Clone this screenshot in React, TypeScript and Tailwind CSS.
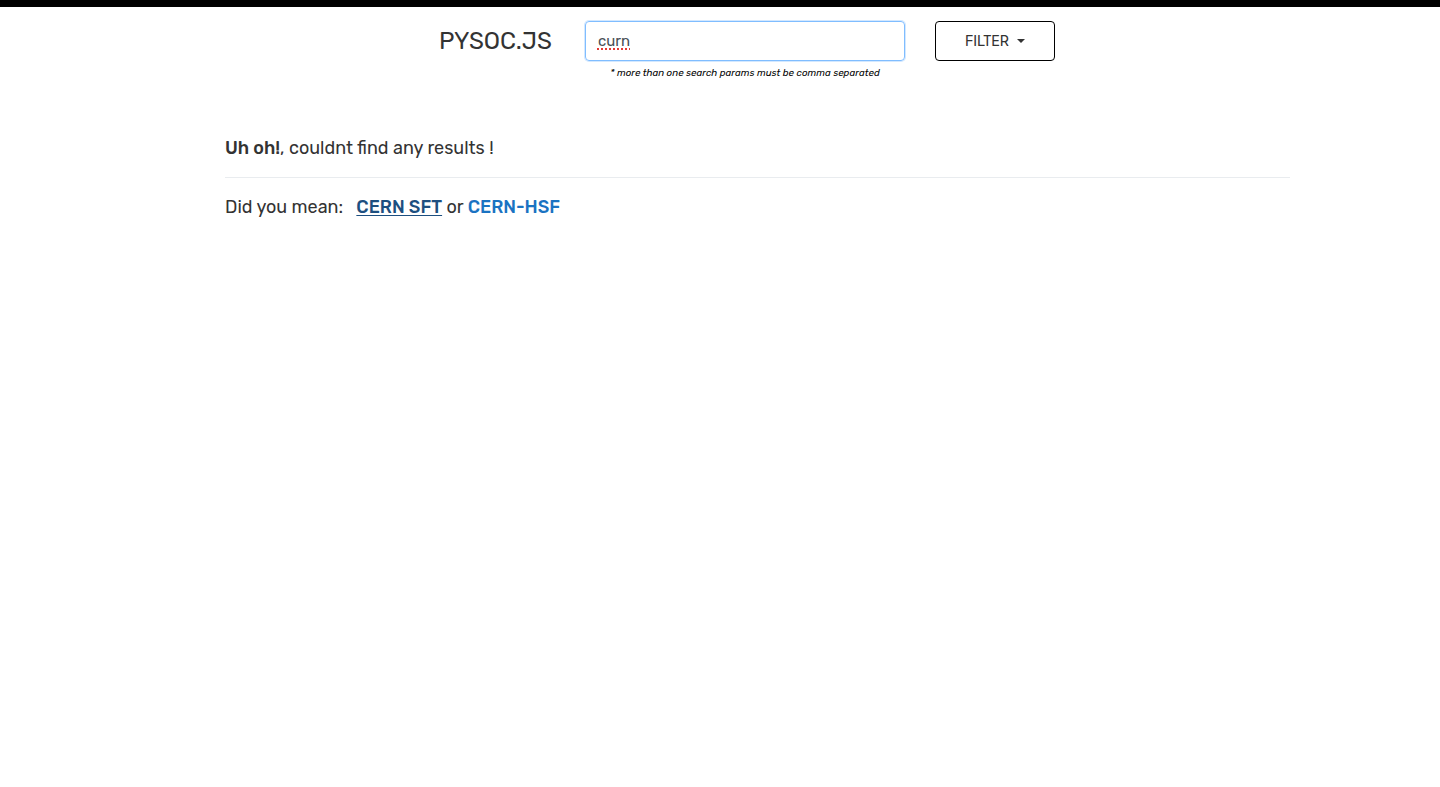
import React from "react";

export default function App() {
  const font = { fontFamily: '"Rubik", Inter, "Noto Sans", sans-serif' };
  return (
    <div className="min-h-[787px] bg-white text-[#212529]" style={font}>
      <div className="h-[7px] bg-black" />
      <div className="flex items-start pt-[14px] pl-[439px]">
        <div className="h-[40px] flex items-center text-[24px] text-[#333] font-normal">
          PYSOC.JS
        </div>
        <div className="ml-[33px] flex flex-col items-center">
          <div className="w-[320px] h-[40px] rounded-[4px] border border-[#80bdff] shadow-[0_0_0_1px_rgba(128,189,255,0.35)] flex items-center px-[12px] text-[15px] text-[#495057]">
            <span className="underline decoration-dotted decoration-[#e53935] decoration-2 underline-offset-[3px]">curn</span>
          </div>
          <div className="mt-[5px] text-[9.8px] italic text-black">
            * more than one search params must be comma separated
          </div>
        </div>
        <button className="ml-[30px] w-[120px] h-[40px] rounded-[4px] border border-black flex items-center justify-center gap-[8px] text-[14px] text-[#333]">
          FILTER
          <span className="w-0 h-0 border-l-[4px] border-r-[4px] border-t-[4px] border-l-transparent border-r-transparent border-t-[#333]" />
        </button>
      </div>
      <div className="ml-[225px] w-[1065px] mt-[53px]">
        <div className="text-[18px] leading-[28px] text-[#333]">
          <span className="font-medium">Uh oh!</span>, couldnt find any results !
        </div>
        <div className="mt-[15px] border-t border-[#e9ecef]" />
        <div className="mt-[15px] text-[18px] leading-[28px] text-[#333]">
          Did you mean:&nbsp;&nbsp;&nbsp;
          <a href="#" className="font-medium text-[#1d4f80] underline underline-offset-[2px]">CERN SFT</a>{" "}
          or{" "}
          <a href="#" className="font-medium text-[#1a73c2]">CERN-HSF</a>
        </div>
      </div>
    </div>
  );
}
